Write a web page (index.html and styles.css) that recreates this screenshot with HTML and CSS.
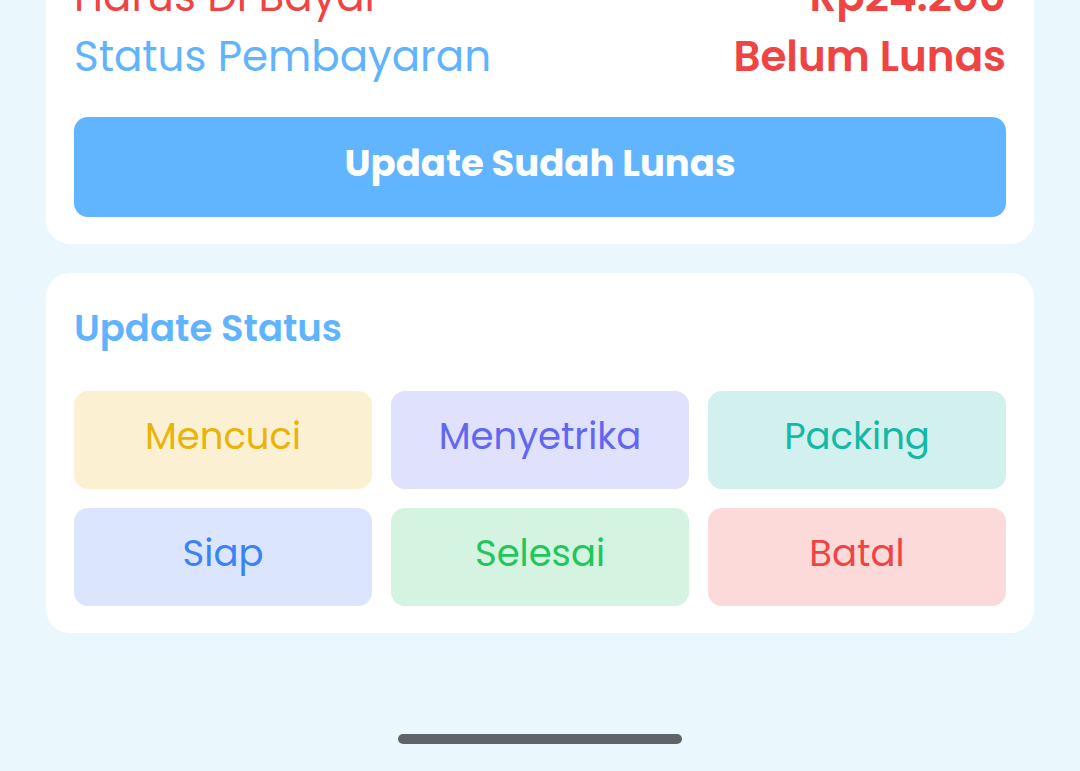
FILE: index.html
```html
<!DOCTYPE html>
<html lang="id">
<head>
<meta charset="utf-8">
<title>Detail Transaksi</title>
<link rel="stylesheet" href="styles.css">
</head>
<body>
<main class="page">
  <section class="card card-payment">
    <div class="row">
      <span class="label label-red">Harus Di Bayar</span>
      <span class="value">Rp24.200</span>
    </div>
    <div class="row">
      <span class="label">Status Pembayaran</span>
      <span class="value">Belum Lunas</span>
    </div>
    <button class="btn-primary" type="button">Update Sudah Lunas</button>
  </section>

  <section class="card card-status">
    <h2 class="card-title">Update Status</h2>
    <div class="status-grid">
      <button class="status status-yellow" type="button">Mencuci</button>
      <button class="status status-indigo" type="button">Menyetrika</button>
      <button class="status status-teal" type="button">Packing</button>
      <button class="status status-blue" type="button">Siap</button>
      <button class="status status-green" type="button">Selesai</button>
      <button class="status status-red" type="button">Batal</button>
    </div>
  </section>

  <div class="home-bar"><span class="home-indicator"></span></div>
</main>
</body>
</html>
```

FILE: styles.css
```css
* {
  box-sizing: border-box;
}

html, body {
  margin: 0;
  padding: 0;
}

body {
  background: #eaf8fe;
  font-family: Poppins, "Open Sans", sans-serif;
  height: 771px;
  overflow: hidden;
}

.page {
  padding: 0 46px;
  display: flex;
  flex-direction: column;
}

.card {
  background: #ffffff;
  border-radius: 24px;
  padding: 28px;
}

.card-payment {
  margin-top: -61px;
  padding-bottom: 27px;
  border-top-left-radius: 0;
  border-top-right-radius: 0;
}

.row {
  display: flex;
  justify-content: space-between;
  align-items: baseline;
  height: 60px;
  line-height: 60px;
}

.label {
  font-size: 42px;
  color: #60b4fe;
  font-weight: 400;
}

.label-red {
  color: #ef4444;
}

.value {
  font-size: 42px;
  color: #ef4444;
  font-weight: 600;
}

.btn-primary {
  margin-top: 30px;
  height: 100px;
  width: 100%;
  border: none;
  border-radius: 14px;
  background: #61b4fe;
  color: #ffffff;
  font-family: inherit;
  font-size: 37px;
  font-weight: 700;
  padding: 0 0 8px 0;
}

.card-status {
  margin-top: 29px;
  padding-top: 27px;
  padding-bottom: 27px;
}

.card-title {
  margin: 0;
  font-size: 37px;
  font-weight: 600;
  color: #60b4fe;
  line-height: 56px;
  height: 91px;
}

.status-grid {
  display: grid;
  grid-template-columns: repeat(3, 1fr);
  column-gap: 19px;
  row-gap: 19px;
}

.status {
  height: 98px;
  border: none;
  border-radius: 14px;
  font-family: inherit;
  font-size: 37px;
  font-weight: 400;
  padding: 0 0 8px 0;
}

.status-yellow { background: #fcf0d2; color: #eab308; }
.status-indigo { background: #e0e1fc; color: #6366f1; }
.status-teal { background: #d1f0ee; color: #14b8a6; }
.status-blue { background: #dbe6fe; color: #3b82f6; }
.status-green { background: #d4f3e0; color: #22c55e; }
.status-red { background: #fcdada; color: #ef4444; }

.home-bar {
  display: flex;
  justify-content: center;
  padding-top: 101px;
}

.home-indicator {
  width: 284px;
  height: 10px;
  border-radius: 5px;
  background: #5f6467;
}
```
